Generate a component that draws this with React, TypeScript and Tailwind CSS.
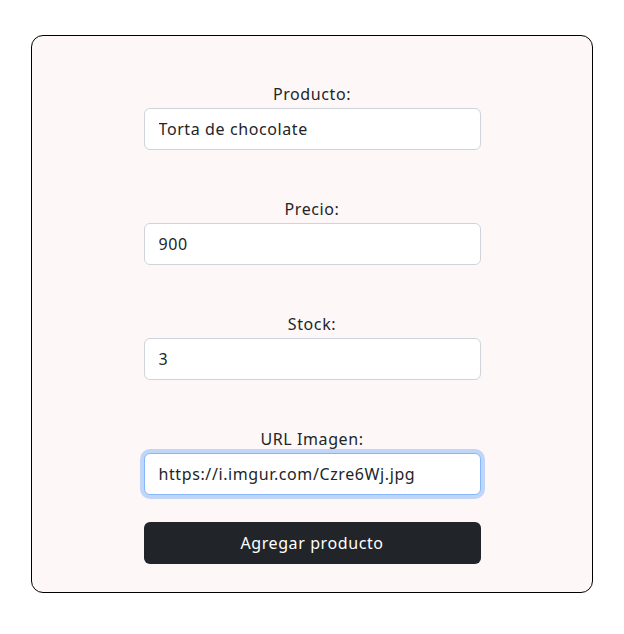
export default function App() {
  const fields = [
    { label: "Producto:", value: "Torta de chocolate" },
    { label: "Precio:", value: "900" },
    { label: "Stock:", value: "3" },
    { label: "URL Imagen:", value: "https://i.imgur.com/Czre6Wj.jpg", focused: true },
  ];

  return (
    <div className="min-h-screen bg-white pt-[35px] px-[31px] font-['Noto_Sans',sans-serif] tracking-[0.6px] text-[#212529]">
      <div className="w-[562px] border border-black rounded-xl bg-[#fdf8f7] pt-[46px] pb-[28px]">
        <form className="w-[337px] mx-auto flex flex-col gap-[27px]">
          <div className="flex flex-col gap-[47px]">
            {fields.map((f) => (
              <div key={f.label} className="flex flex-col">
                <label className="text-center text-base leading-6 mb-[2px]">{f.label}</label>
                <input
                  readOnly
                  value={f.value}
                  className={
                    f.focused
                      ? "h-[42px] w-full rounded-md border border-[#86b7fe] bg-white pl-[14px] pr-3 text-base text-[#212529] outline-none shadow-[0_0_0_4px_rgba(13,110,253,0.25)]"
                      : "h-[42px] w-full rounded-md border border-[#ced4da] bg-white pl-[14px] pr-3 text-base text-[#212529] outline-none"
                  }
                />
              </div>
            ))}
          </div>
          <button
            type="button"
            className="h-[42px] w-full rounded-md bg-[#212529] text-white text-base"
          >
            Agregar producto
          </button>
        </form>
      </div>
    </div>
  );
}
